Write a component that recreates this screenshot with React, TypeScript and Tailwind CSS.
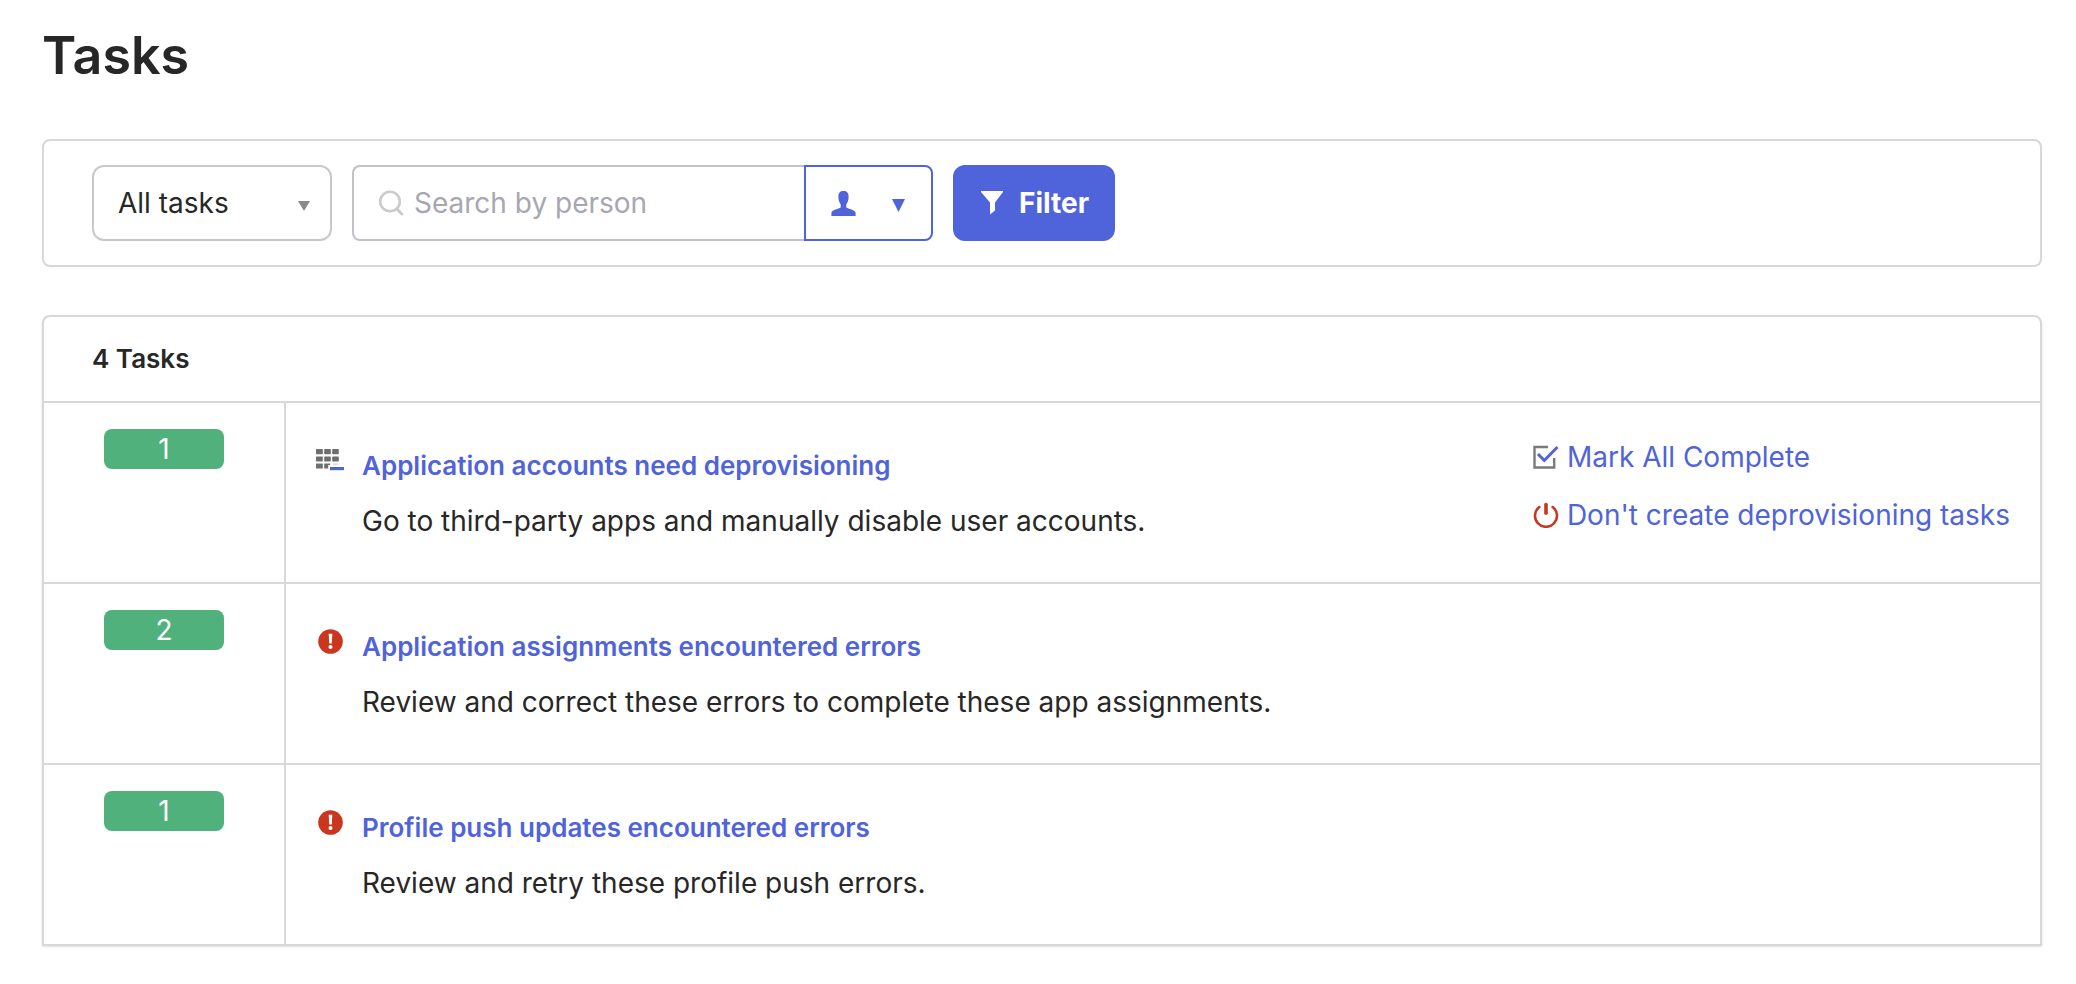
import React from "react";

const titleFont = "font-['Inter',sans-serif] font-semibold";

function GridMinusIcon() {
  return (
    <svg viewBox="0 0 28 24" className="h-6 w-7" aria-hidden="true">
      <g fill="#6e6e6e">
        <rect x="0" y="1" width="6.8" height="5.2" rx=".6" />
        <rect x="8.2" y="1" width="6.6" height="5.2" rx=".6" />
        <rect x="16.2" y="1" width="6.6" height="5.2" rx=".6" />
        <rect x="0" y="8.4" width="6.8" height="5" rx=".6" />
        <rect x="8.2" y="8.4" width="6.6" height="5" rx=".6" />
        <rect x="16.2" y="8.4" width="6.6" height="5" rx=".6" />
        <rect x="0" y="15.6" width="6.8" height="5" rx=".6" />
        <path d="M8.800 15.600h5.400v1.500h-2V20.600H8.800a.6.6 0 0 1-.6-.6v-3.800a.6.6 0 0 1 .6-.6z" />
        <rect x="17" y="15.6" width="5.400" height="1" opacity="0.4" />
      </g>
      <rect x="14" y="19" width="14" height="3.2" fill="#4f63da" />
    </svg>
  );
}

function AlertIcon() {
  return (
    <svg viewBox="0 0 25 25" className="h-[25px] w-[25px]" aria-hidden="true">
      <circle cx="12.5" cy="12.5" r="12.3" fill="#c9371f" />
      <path d="M10.700 4.800h3.600l-.5 9.600h-2.600z" fill="#fff" />
      <circle cx="12.5" cy="18" r="2" fill="#fff" />
    </svg>
  );
}

function CheckIcon() {
  return (
    <svg viewBox="0 0 26 26" className="h-[26px] w-[26px]" aria-hidden="true" fill="none">
      <path d="M15 3H1.500v20.500h19.700V14" stroke="#7a7a7a" strokeWidth="2.4" />
      <path d="M5 10l6.300 6.500L24.500 3" stroke="#4f63da" strokeWidth="2.9" />
    </svg>
  );
}

function PowerIcon() {
  return (
    <svg viewBox="0 0 26 26" className="h-[26px] w-[26px]" aria-hidden="true" fill="none" stroke="#c9371f" strokeLinecap="round">
      <path d="M6.400 5a11 11 0 1 0 13.200 0" strokeWidth="2.600" />
      <path d="M13 2.500v8.700" strokeWidth="3.600" />
    </svg>
  );
}

type Task = { count: number; title: string; text: string; icon: React.ReactNode; actions?: boolean };

const tasks: Task[] = [
  {
    count: 1,
    title: "Application accounts need deprovisioning",
    text: "Go to third-party apps and manually disable user accounts.",
    icon: <GridMinusIcon />,
    actions: true,
  },
  {
    count: 2,
    title: "Application assignments encountered errors",
    text: "Review and correct these errors to complete these app assignments.",
    icon: <AlertIcon />,
  },
  {
    count: 1,
    title: "Profile push updates encountered errors",
    text: "Review and retry these profile push errors.",
    icon: <AlertIcon />,
  },
];

export default function App() {
  return (
    <main className="bg-white pt-[26px] pr-[34px] pb-9 pl-[42px] font-['Inter',sans-serif] text-[28px] leading-9 text-[#272727]">
      <h1 className={`${titleFont} text-[52px] leading-[60px]`}>Tasks</h1>

      <form
        className="mt-[53px] flex items-center rounded-lg border-2 border-[#d7d7dc] px-12 py-6"
        onSubmit={(e) => e.preventDefault()}
      >
        <div className="relative w-60">
          <select
            aria-label="Task type"
            className="h-[76px] w-full appearance-none rounded-xl border-2 border-[#c9c9c9] bg-white pl-6"
          >
            <option>All tasks</option>
          </select>
          <svg viewBox="0 0 12 10" className="pointer-events-none absolute top-9 right-[22px] h-[10px] w-3" aria-hidden="true">
            <path d="M0 0h12L6 10z" fill="#8a8a8a" />
          </svg>
        </div>

        <div className="ml-5 flex">
          <label className="flex h-[76px] w-[452px] items-center rounded-l-lg border-2 border-r-0 border-[#c1c1c8] pl-6">
            <svg viewBox="0 0 26 26" className="h-[26px] w-[26px] shrink-0" fill="none" stroke="#cbcbcb" strokeLinecap="round" aria-hidden="true">
              <circle cx="12" cy="11.5" r="9.8" strokeWidth="2.6" />
              <path d="M19 19l4.800 5" strokeWidth="3" />
            </svg>
            <input
              type="text"
              aria-label="Search by person"
              placeholder="Search by person"
              className="ml-2.5 w-full min-w-0 bg-transparent outline-none placeholder:text-[#a7a7b2]"
            />
          </label>
          <button
            type="button"
            aria-label="Search scope"
            className="flex h-[76px] w-[129px] items-center rounded-r-lg border-2 border-[#4f63da] pl-[25px] text-[#4f63da]"
          >
            <svg viewBox="0 0 25 25" className="h-[25px] w-[25px]" fill="currentColor" aria-hidden="true">
              <path d="M12.500 0C9 0 7.400 2 7.400 5.500c0 3.500.8 5.800 2.300 8v3C7.500 18 1.500 18.500.4 21.500V25h24.200v-3.500c-1.100-3-7.100-3.500-9.300-5v-3c1.500-2.200 2.300-4.500 2.300-8C17.600 2 16 0 12.500 0z" />
            </svg>
            <svg viewBox="0 0 13 13" className="mt-1 ml-9 h-[13px] w-[13px]" fill="currentColor" aria-hidden="true">
              <path d="M0 0h13L6.500 13z" />
            </svg>
          </button>
        </div>

        <button
          type="submit"
          className="ml-5 flex h-[76px] items-center gap-4 rounded-xl bg-[#4f63da] pr-[26px] pl-7 font-bold text-white"
        >
          <svg viewBox="0 0 22 24" className="h-6 w-[22px]" fill="currentColor" aria-hidden="true">
            <path d="M0 0h22v1L14 11.500v8L9 23.500v-12L0 1z" />
          </svg>
          Filter
        </button>
      </form>

      <section className="mt-12 rounded-t-lg border-2 border-[#d7d7dc] shadow-sm">
        <h2 className={`${titleFont} px-12 py-6 text-[26px]`}>4 Tasks</h2>
        <ul>
          {tasks.map((task) => (
            <li key={task.title} className="flex min-h-[181px] border-t-2 border-[#d7d7dc]">
              <div className="w-[242px] shrink-0 border-r-2 border-[#d7d7dc] px-[60px] pt-[26px]">
                <div className="rounded-lg bg-[#51b17d] py-0.5 text-center text-white">{task.count}</div>
              </div>
              <div className="flex w-[76px] shrink-0 justify-center pt-[45px] pr-3 pl-6">
                <span>{task.icon}</span>
              </div>
              <div className="grow pt-11">
                <h3>
                  <a href="#" className={`${titleFont} text-[26px] text-[#4f63da]`}>{task.title}</a>
                </h3>
                <p className="mt-[19px]">{task.text}</p>
              </div>
              {task.actions && (
                <div className="flex flex-col gap-[22px] pt-9 pr-[30px] text-[#4f63da]">
                  <a href="#" className="flex items-center gap-2"><CheckIcon />Mark All Complete</a>
                  <a href="#" className="flex items-center gap-2"><PowerIcon />Don't create deprovisioning tasks</a>
                </div>
              )}
            </li>
          ))}
        </ul>
      </section>
    </main>
  );
}
